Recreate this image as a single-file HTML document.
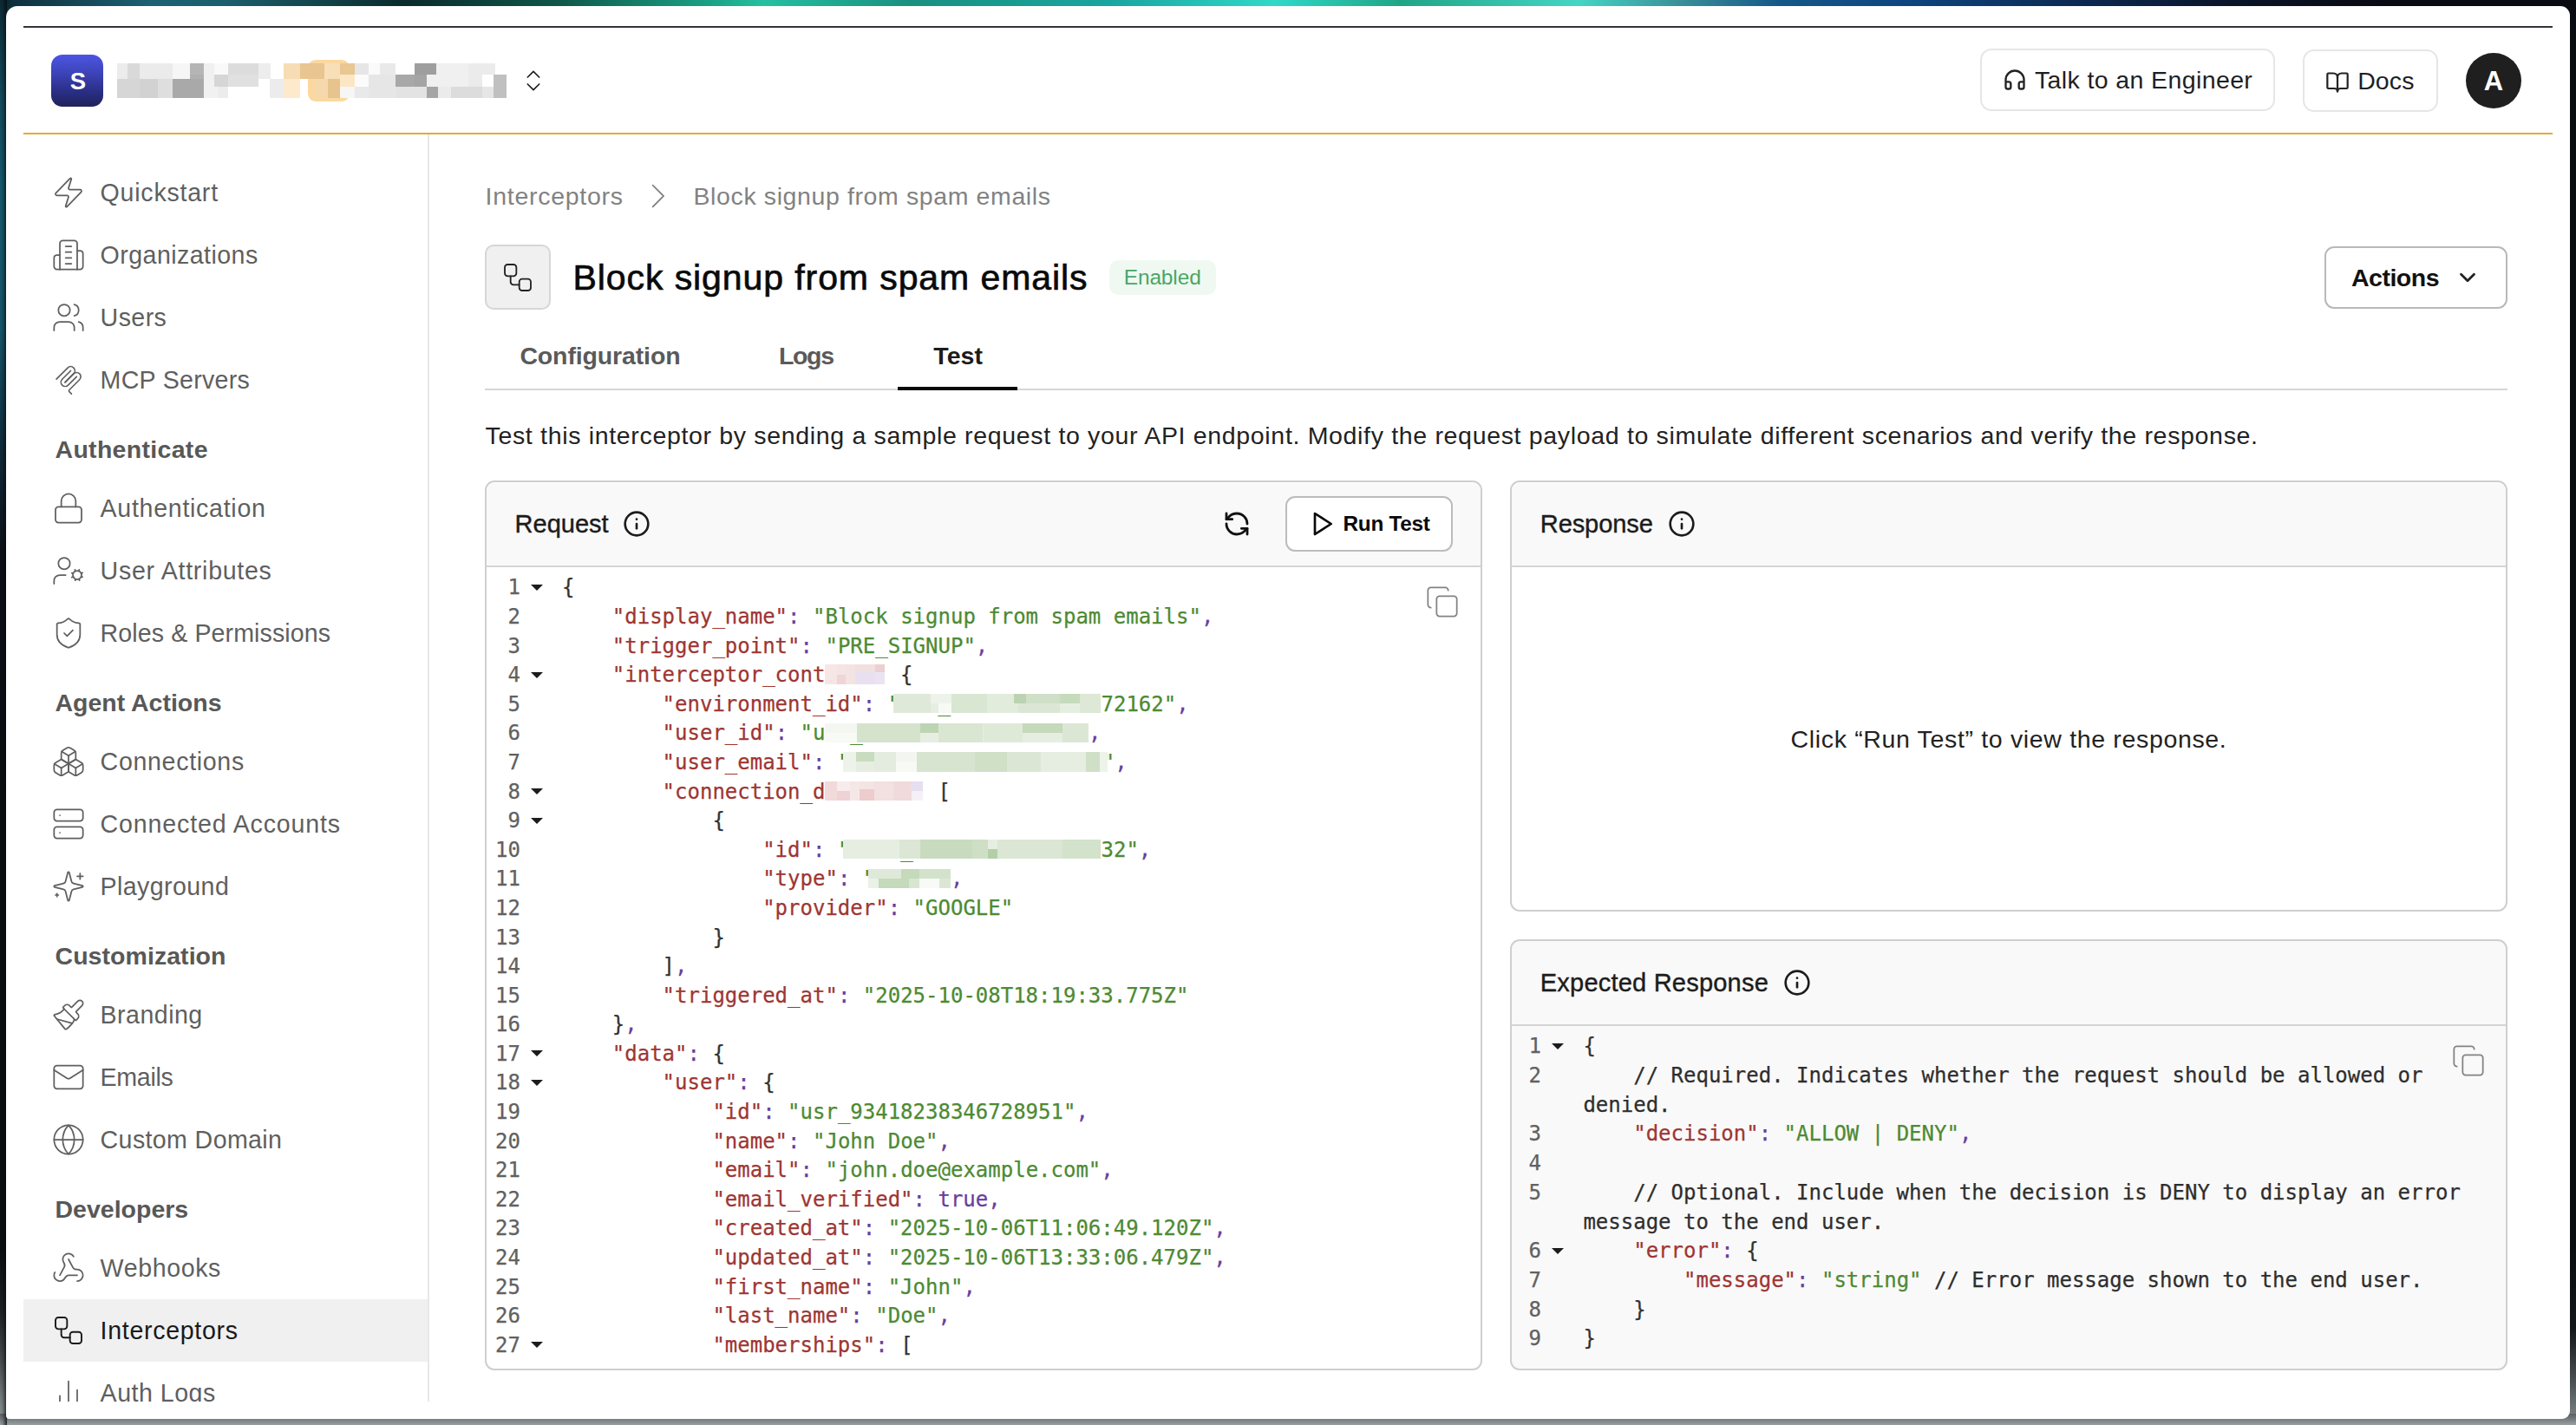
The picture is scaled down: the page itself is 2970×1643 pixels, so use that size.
<!DOCTYPE html>
<html lang="en"><head><meta charset="utf-8"><title>Interceptors – Block signup from spam emails</title>
<style>
html,body{margin:0;padding:0;background:#0b0c10;}
body{width:2970px;height:1643px;overflow:hidden;position:relative;background:#0b0c10;font-family:"Liberation Sans", sans-serif;}
.b{position:absolute;}
.i{position:absolute;display:block;overflow:visible;}
.t{position:absolute;white-space:pre;line-height:1;font-family:"Liberation Sans", sans-serif;}
.ed{position:absolute;font-family:"DejaVu Sans Mono", "Liberation Mono", monospace;font-size:24px;line-height:var(--lh);white-space:pre;color:#333;-webkit-text-stroke:0.25px currentColor;}
.row{position:relative;height:var(--lh);}
.n{position:absolute;left:0;width:60px;text-align:right;color:#616161;}
.f{position:absolute;left:72.4px;top:12.6px;width:0;height:0;border-left:7.6px solid transparent;border-right:7.6px solid transparent;border-top:7.8px solid #1c1c1c;}
.code{position:absolute;left:var(--c0);top:0;}
.k{color:#9e3633;}
.s{color:#4d8a33;}
.p{color:#6a3d9e;}
.v{color:#6a3d9e;}
.c{color:#2e2e2e;}
.br{color:#333;}
.patch{display:inline-block;position:relative;height:22.4px;vertical-align:-2.6px;overflow:hidden;}
.patch i{position:absolute;display:block;}
</style></head>
<body>
<div class="b" style="left:0px;top:0px;width:2970px;height:1643px;background:#0b0c10"></div>
<div class="b" style="left:0px;top:0px;width:2970px;height:30px;background:linear-gradient(90deg,#0e2a3a 0px,#1c6272 175px,#1b5f6c 260px,#0a2a2c 466px,#0f5548 640px,#1aa084 815px,#25c0a0 880px,#189080 1048px,#1aa5a0 1281px,#30d8c8 1470px,#1fa585 1615px,#45d5c5 1820px,#3a9098 1936px,#155888 2052px,#0e4580 2198px,#0c2850 2402px,#0a1428 2577px,#0a0a12 2750px)"></div>
<div class="b" style="left:0px;top:0px;width:12px;height:900px;background:linear-gradient(180deg,#0c2a35 0px,#134a5c 110px,#165a6e 220px,#16566a 380px,#0f2a3a 520px,#0b0f16 640px,#0b0c10 900px)"></div>
<div class="b" style="left:0px;top:1440px;width:12px;height:203px;background:linear-gradient(180deg,#0b0c10 0%,#1d2022 35%,#4a4f51 65%,#7d8485 88%,#969c9d 100%)"></div>
<div class="b" style="left:2958px;top:1440px;width:12px;height:203px;background:linear-gradient(180deg,#0b0c10 0%,#14161a 45%,#4a4f51 75%,#858b8c 100%)"></div>
<div class="b" style="left:0px;top:1630px;width:2970px;height:13px;background:linear-gradient(180deg,#5a6062 0%,#70777a 40%,#9aa0a1 100%)"></div>
<div class="b" style="left:0px;top:0px;width:8px;height:1643px;background:linear-gradient(90deg,rgba(5,10,15,0) 0%,rgba(5,10,15,.15) 40%,rgba(5,10,15,.8) 100%)"></div>
<div class="b" style="left:7px;top:7px;width:2956px;height:1629px;background:#fff;border-radius:13px 11px 9px 4px"></div>
<div class="b" style="left:27px;top:30px;width:2916px;height:2px;background:#34323a"></div>
<div class="b" style="left:27px;top:153px;width:2916px;height:2px;background:#e2ab35"></div>
<div class="b" style="left:59px;top:63px;width:60px;height:60px;background:linear-gradient(180deg,#4c55e4 0%,#3d44b8 35%,#2a2f86 70%,#1f2259 100%);border-radius:13px"></div>
<span id="logoS" class="t" style="left:80.8px;top:80.0px;font-size:27.5px;font-weight:700;color:#fff;letter-spacing:0.000px;">S</span>
<div class="b" style="left:355px;top:69px;width:48px;height:48px;background:#fbd89f;border-radius:9px"></div>
<div class="b" style="left:135px;top:73px;width:12px;height:18px;background:#ececec"></div>
<div class="b" style="left:147px;top:73px;width:14px;height:18px;background:#d9d9d9"></div>
<div class="b" style="left:161px;top:73px;width:38px;height:18px;background:#ebebeb"></div>
<div class="b" style="left:199px;top:73px;width:20px;height:18px;background:#f6f6f6"></div>
<div class="b" style="left:219px;top:73px;width:16px;height:18px;background:#b5b5b5"></div>
<div class="b" style="left:235px;top:73px;width:12px;height:18px;background:#f0f0f0"></div>
<div class="b" style="left:247px;top:73px;width:16px;height:18px;background:#f9f9f9"></div>
<div class="b" style="left:263px;top:73px;width:35px;height:18px;background:#dcdcdc"></div>
<div class="b" style="left:298px;top:73px;width:14px;height:18px;background:#ededed"></div>
<div class="b" style="left:135px;top:91px;width:26px;height:22px;background:#d6d6d6"></div>
<div class="b" style="left:161px;top:91px;width:21px;height:22px;background:#d2d2d2"></div>
<div class="b" style="left:182px;top:91px;width:17px;height:22px;background:#dedede"></div>
<div class="b" style="left:199px;top:91px;width:36px;height:22px;background:#a9a9a9"></div>
<div class="b" style="left:219px;top:86px;width:16px;height:5px;background:#b0b0b0"></div>
<div class="b" style="left:235px;top:91px;width:16px;height:22px;background:#f1f1f1"></div>
<div class="b" style="left:251px;top:91px;width:12px;height:22px;background:#ececec"></div>
<div class="b" style="left:247px;top:86px;width:16px;height:14px;background:#d6d6d6"></div>
<div class="b" style="left:263px;top:86px;width:35px;height:14px;background:#e0e0e0"></div>
<div class="b" style="left:311px;top:91px;width:16px;height:22px;background:#ececec"></div>
<div class="b" style="left:327px;top:73px;width:19px;height:18px;background:#f6ddb5"></div>
<div class="b" style="left:346px;top:73px;width:28px;height:18px;background:#e8c591"></div>
<div class="b" style="left:374px;top:73px;width:18px;height:18px;background:#f8dfb8"></div>
<div class="b" style="left:392px;top:73px;width:17px;height:18px;background:#e9c793"></div>
<div class="b" style="left:327px;top:91px;width:19px;height:22px;background:#fde9cc"></div>
<div class="b" style="left:363px;top:91px;width:15px;height:22px;background:#f5d9ad"></div>
<div class="b" style="left:378px;top:91px;width:14px;height:22px;background:#e7c38d"></div>
<div class="b" style="left:392px;top:86px;width:17px;height:14px;background:#fde6c6"></div>
<div class="b" style="left:409px;top:73px;width:16px;height:13px;background:#e6e6e6"></div>
<div class="b" style="left:425px;top:73px;width:13px;height:13px;background:#fafafa"></div>
<div class="b" style="left:438px;top:73px;width:18px;height:13px;background:#e9e9e9"></div>
<div class="b" style="left:409px;top:86px;width:16px;height:14px;background:#fbfbfb"></div>
<div class="b" style="left:425px;top:86px;width:31px;height:27px;background:#e6e6e6"></div>
<div class="b" style="left:392px;top:100px;width:17px;height:13px;background:#f6f6f6"></div>
<div class="b" style="left:409px;top:100px;width:16px;height:13px;background:#e9e9e9"></div>
<div class="b" style="left:456px;top:86px;width:22px;height:14px;background:#a8a8a8"></div>
<div class="b" style="left:478px;top:73px;width:25px;height:13px;background:#9e9e9e"></div>
<div class="b" style="left:478px;top:86px;width:14px;height:14px;background:#a4a4a4"></div>
<div class="b" style="left:492px;top:86px;width:13px;height:14px;background:#f0f0f0"></div>
<div class="b" style="left:505px;top:86px;width:15px;height:14px;background:#a6a6a6"></div>
<div class="b" style="left:456px;top:100px;width:36px;height:13px;background:#e3e3e3"></div>
<div class="b" style="left:492px;top:100px;width:13px;height:13px;background:#a5a5a5"></div>
<div class="b" style="left:505px;top:100px;width:15px;height:13px;background:#ebebeb"></div>
<div class="b" style="left:503px;top:73px;width:37px;height:27px;background:#f0f0f0"></div>
<div class="b" style="left:540px;top:73px;width:31px;height:27px;background:#ebebeb"></div>
<div class="b" style="left:520px;top:100px;width:36px;height:13px;background:#dcdcdc"></div>
<div class="b" style="left:556px;top:86px;width:15px;height:14px;background:#ffffff"></div>
<div class="b" style="left:556px;top:100px;width:13px;height:13px;background:#e6e6e6"></div>
<div class="b" style="left:569px;top:86px;width:15px;height:27px;background:#c0c0c0"></div>
<svg class="i" style="left:599.0px;top:77.0px" width="32" height="32" viewBox="0 0 24 24" fill="none" stroke="#222" stroke-width="1.3" stroke-linecap="round" stroke-linejoin="round"><path d="m7 15 5 5 5-5"/><path d="m7 9 5-5 5 5"/></svg>
<div class="b" style="left:2282.8px;top:55.8px;width:339.7999999999997px;height:72.0px;border:2px solid #e6e6e6;border-radius:13px;box-sizing:border-box;background:#fff"></div>
<svg class="i" style="left:2308.8px;top:78.2px" width="28" height="28" viewBox="0 0 24 24" fill="none" stroke="#222" stroke-width="2" stroke-linecap="round" stroke-linejoin="round"><path d="M3 14h3a2 2 0 0 1 2 2v3a2 2 0 0 1-2 2H5a2 2 0 0 1-2-2v-7a9 9 0 0 1 18 0v7a2 2 0 0 1-2 2h-1a2 2 0 0 1-2-2v-3a2 2 0 0 1 2-2h3"/></svg>
<span id="talk" class="t" style="left:2345.9px;top:78.4px;font-size:28.5px;font-weight:400;color:#1f1f1f;letter-spacing:0.388px;">Talk to an Engineer</span>
<div class="b" style="left:2654.9px;top:56.6px;width:156.0999999999999px;height:72.20000000000002px;border:2px solid #e6e6e6;border-radius:13px;box-sizing:border-box;background:#fff"></div>
<svg class="i" style="left:2680.8px;top:81.0px" width="28" height="28" viewBox="0 0 24 24" fill="none" stroke="#222" stroke-width="1.9" stroke-linecap="round" stroke-linejoin="round"><path d="M12 7v14"/><path d="M3 18a1 1 0 0 1-1-1V4a1 1 0 0 1 1-1h5a4 4 0 0 1 4 4 4 4 0 0 1 4-4h5a1 1 0 0 1 1 1v13a1 1 0 0 1-1 1h-6a3 3 0 0 0-3 3 3 3 0 0 0-3-3z"/></svg>
<span id="docs" class="t" style="left:2718.2px;top:79.3px;font-size:28.5px;font-weight:400;color:#1f1f1f;letter-spacing:0.089px;">Docs</span>
<div class="b" style="left:2843px;top:61px;width:64px;height:64px;background:#1f1f1f;border-radius:50%"></div>
<span id="avA" class="t" style="left:2863.8px;top:78.0px;font-size:31px;font-weight:700;color:#fff;letter-spacing:0.000px;">A</span>
<div class="b" style="left:493px;top:155px;width:2px;height:1461px;background:#e8e8e8"></div>
<div class="b" style="left:27px;top:1498px;width:466px;height:72px;background:#f0f0f0"></div>
<svg class="i" style="left:59.0px;top:201.6px" width="40" height="40" viewBox="0 0 24 24" fill="none" stroke="#5f5f5f" stroke-width="1.05" stroke-linecap="round" stroke-linejoin="round"><path d="M4 14a1 1 0 0 1-.78-1.63l9.9-10.2a.5.5 0 0 1 .86.46l-1.92 6.02A1 1 0 0 0 13 10h7a1 1 0 0 1 .78 1.63l-9.9 10.2a.5.5 0 0 1-.86-.46l1.92-6.02A1 1 0 0 0 11 14z"/></svg>
<span id="nav0" class="t" style="left:115.6px;top:207.8px;font-size:28.6px;font-weight:400;color:#5f5f5f;letter-spacing:0.754px;">Quickstart</span>
<svg class="i" style="left:59.0px;top:273.6px" width="40" height="40" viewBox="0 0 24 24" fill="none" stroke="#5f5f5f" stroke-width="1.05" stroke-linecap="round" stroke-linejoin="round"><path d="M6 22V4a2 2 0 0 1 2-2h8a2 2 0 0 1 2 2v18Z"/><path d="M6 12H4a2 2 0 0 0-2 2v6a2 2 0 0 0 2 2h2"/><path d="M18 9h2a2 2 0 0 1 2 2v9a2 2 0 0 1-2 2h-2"/><path d="M10 6h4"/><path d="M10 10h4"/><path d="M10 14h4"/><path d="M10 18h4"/></svg>
<span id="nav1" class="t" style="left:115.6px;top:279.8px;font-size:28.6px;font-weight:400;color:#5f5f5f;letter-spacing:0.431px;">Organizations</span>
<svg class="i" style="left:59.0px;top:345.8px" width="40" height="40" viewBox="0 0 24 24" fill="none" stroke="#5f5f5f" stroke-width="1.05" stroke-linecap="round" stroke-linejoin="round"><path d="M16 21v-2a4 4 0 0 0-4-4H6a4 4 0 0 0-4 4v2"/><circle cx="9" cy="7" r="4"/><path d="M22 21v-2a4 4 0 0 0-3-3.87"/><path d="M16 3.13a4 4 0 0 1 0 7.75"/></svg>
<span id="nav2" class="t" style="left:115.6px;top:351.9px;font-size:28.6px;font-weight:400;color:#5f5f5f;letter-spacing:0.407px;">Users</span>
<svg class="i" style="left:59.0px;top:417.8px" width="40" height="40" viewBox="0 0 24 24" fill="none" stroke="#5f5f5f" stroke-width="1.05" stroke-linecap="round" stroke-linejoin="round"><g transform="translate(12 12.2) scale(.93) translate(-12 -12)"><path d="M3 11.2 11.4 2.8a3.1 3.1 0 0 1 4.4 4.4L9.4 13.6"/><path d="M9.5 13.5l6.3-6.3a3.1 3.1 0 0 1 4.4 4.4l-7.6 7.6a1 1 0 0 0 0 1.4l1.6 1.6"/><path d="M13.6 5 7.3 11.3a3.1 3.1 0 0 0 4.4 4.4L18 9.4"/></g></svg>
<span id="nav3" class="t" style="left:115.6px;top:423.9px;font-size:28.6px;font-weight:400;color:#5f5f5f;letter-spacing:0.281px;">MCP Servers</span>
<svg class="i" style="left:59.0px;top:565.8px" width="40" height="40" viewBox="0 0 24 24" fill="none" stroke="#5f5f5f" stroke-width="1.05" stroke-linecap="round" stroke-linejoin="round"><rect width="18" height="11" x="3" y="11" rx="2" ry="2"/><path d="M7 11V7a5 5 0 0 1 10 0v4"/></svg>
<span id="nav4" class="t" style="left:115.6px;top:571.9px;font-size:28.6px;font-weight:400;color:#5f5f5f;letter-spacing:0.697px;">Authentication</span>
<svg class="i" style="left:59.0px;top:637.8px" width="40" height="40" viewBox="0 0 24 24" fill="none" stroke="#5f5f5f" stroke-width="1.05" stroke-linecap="round" stroke-linejoin="round"><circle cx="18" cy="15" r="3"/><circle cx="9" cy="7" r="4"/><path d="M10 15H6a4 4 0 0 0-4 4v2"/><path d="m21.7 16.4-.9-.3"/><path d="m15.2 13.9-.9-.3"/><path d="m16.6 18.7.3-.9"/><path d="m19.1 12.2.3-.9"/><path d="m19.6 18.7-.4-1"/><path d="m16.8 12.3-.4-1"/><path d="m14.3 16.6 1-.4"/><path d="m20.7 13.8 1-.4"/></svg>
<span id="nav5" class="t" style="left:115.6px;top:643.9px;font-size:28.6px;font-weight:400;color:#5f5f5f;letter-spacing:0.697px;">User Attributes</span>
<svg class="i" style="left:59.0px;top:709.8px" width="40" height="40" viewBox="0 0 24 24" fill="none" stroke="#5f5f5f" stroke-width="1.05" stroke-linecap="round" stroke-linejoin="round"><path d="M20 13c0 5-3.5 7.5-7.66 8.95a1 1 0 0 1-.67-.01C7.5 20.5 4 18 4 13V6a1 1 0 0 1 1-1c2 0 4.5-1.2 6.24-2.72a1.17 1.17 0 0 1 1.52 0C14.51 3.81 17 5 19 5a1 1 0 0 1 1 1z"/><path d="m9 12 2 2 4-4"/></svg>
<span id="nav6" class="t" style="left:115.6px;top:715.9px;font-size:28.6px;font-weight:400;color:#5f5f5f;letter-spacing:0.096px;">Roles &amp; Permissions</span>
<svg class="i" style="left:59.0px;top:857.8px" width="40" height="40" viewBox="0 0 24 24" fill="none" stroke="#5f5f5f" stroke-width="1.05" stroke-linecap="round" stroke-linejoin="round"><path d="M2.97 12.92A2 2 0 0 0 2 14.63v3.24a2 2 0 0 0 .97 1.71l3 1.8a2 2 0 0 0 2.06 0L12 19v-5.5l-5-3-4.03 2.42Z"/><path d="m7 16.5-4.74-2.85"/><path d="m7 16.5 5-3"/><path d="M7 16.5v5.17"/><path d="M12 13.5V19l3.97 2.38a2 2 0 0 0 2.06 0l3-1.8a2 2 0 0 0 .97-1.71v-3.24a2 2 0 0 0-.97-1.71L17 10.5l-5 3Z"/><path d="m17 16.5-5-3"/><path d="m17 16.5 4.74-2.85"/><path d="M17 16.5v5.17"/><path d="M7.97 4.42A2 2 0 0 0 7 6.13v4.37l5 3 5-3V6.13a2 2 0 0 0-.97-1.71l-3-1.8a2 2 0 0 0-2.06 0l-3 1.8Z"/><path d="M12 8 7.26 5.15"/><path d="m12 8 4.74-2.85"/><path d="M12 13.5V8"/></svg>
<span id="nav7" class="t" style="left:115.6px;top:863.9px;font-size:28.6px;font-weight:400;color:#5f5f5f;letter-spacing:0.663px;">Connections</span>
<svg class="i" style="left:59.0px;top:929.8px" width="40" height="40" viewBox="0 0 24 24" fill="none" stroke="#5f5f5f" stroke-width="1.05" stroke-linecap="round" stroke-linejoin="round"><rect width="20" height="8" x="2" y="2" rx="2" ry="2"/><rect width="20" height="8" x="2" y="14" rx="2" ry="2"/><line x1="6" x2="6.01" y1="6" y2="6"/><line x1="6" x2="6.01" y1="18" y2="18"/></svg>
<span id="nav8" class="t" style="left:115.6px;top:935.9px;font-size:28.6px;font-weight:400;color:#5f5f5f;letter-spacing:0.836px;">Connected Accounts</span>
<svg class="i" style="left:59.0px;top:1001.8px" width="40" height="40" viewBox="0 0 24 24" fill="none" stroke="#5f5f5f" stroke-width="1.05" stroke-linecap="round" stroke-linejoin="round"><path d="M9.937 15.5A2 2 0 0 0 8.5 14.063l-6.135-1.582a.5.5 0 0 1 0-.962L8.5 9.936A2 2 0 0 0 9.937 8.5l1.582-6.135a.5.5 0 0 1 .963 0L14.063 8.5A2 2 0 0 0 15.5 9.937l6.135 1.581a.5.5 0 0 1 0 .964L15.5 14.063a2 2 0 0 0-1.437 1.437l-1.582 6.135a.5.5 0 0 1-.963 0z"/><path d="M20 3v4"/><path d="M22 5h-4"/><path d="M4 17v2"/><path d="M5 18H3"/></svg>
<span id="nav9" class="t" style="left:115.6px;top:1007.9px;font-size:28.6px;font-weight:400;color:#5f5f5f;letter-spacing:0.392px;">Playground</span>
<svg class="i" style="left:59.0px;top:1149.8px" width="40" height="40" viewBox="0 0 24 24" fill="none" stroke="#5f5f5f" stroke-width="1.05" stroke-linecap="round" stroke-linejoin="round"><path d="m14.622 17.897-10.68-2.913"/><path d="M18.376 2.622a1 1 0 1 1 3.002 3.002L17.36 9.643a.5.5 0 0 0 0 .707l.944.944a2.41 2.41 0 0 1 0 3.408l-.944.944a.5.5 0 0 1-.707 0L8.354 7.348a.5.5 0 0 1 0-.707l.944-.944a2.41 2.41 0 0 1 3.408 0l.944.944a.5.5 0 0 0 .707 0z"/><path d="M9 8c-1.804 2.71-3.97 3.46-6.583 3.948a.507.507 0 0 0-.302.819l7.32 8.883a1 1 0 0 0 1.185.204C12.735 20.405 16 16.792 16 15"/></svg>
<span id="nav10" class="t" style="left:115.6px;top:1155.9px;font-size:28.6px;font-weight:400;color:#5f5f5f;letter-spacing:0.448px;">Branding</span>
<svg class="i" style="left:59.0px;top:1221.8px" width="40" height="40" viewBox="0 0 24 24" fill="none" stroke="#5f5f5f" stroke-width="1.05" stroke-linecap="round" stroke-linejoin="round"><rect width="20" height="16" x="2" y="4" rx="2"/><path d="m22 7-8.97 5.7a1.94 1.94 0 0 1-2.06 0L2 7"/></svg>
<span id="nav11" class="t" style="left:115.6px;top:1227.9px;font-size:28.6px;font-weight:400;color:#5f5f5f;letter-spacing:-0.322px;">Emails</span>
<svg class="i" style="left:59.0px;top:1293.8px" width="40" height="40" viewBox="0 0 24 24" fill="none" stroke="#5f5f5f" stroke-width="1.05" stroke-linecap="round" stroke-linejoin="round"><circle cx="12" cy="12" r="10"/><path d="M12 2a14.5 14.5 0 0 0 0 20 14.5 14.5 0 0 0 0-20"/><path d="M2 12h20"/></svg>
<span id="nav12" class="t" style="left:115.6px;top:1299.9px;font-size:28.6px;font-weight:400;color:#5f5f5f;letter-spacing:0.367px;">Custom Domain</span>
<svg class="i" style="left:59.0px;top:1441.8px" width="40" height="40" viewBox="0 0 24 24" fill="none" stroke="#5f5f5f" stroke-width="1.05" stroke-linecap="round" stroke-linejoin="round"><path d="M18 16.98h-5.99c-1.1 0-1.95.94-2.48 1.9A4 4 0 0 1 2 17c.01-.7.2-1.4.57-2"/><path d="m6 17 3.13-5.78c.53-.97.1-2.18-.5-3.1a4 4 0 1 1 6.89-4.06"/><path d="m12 6 3.13 5.73C15.66 12.7 16.9 13 18 13a4 4 0 0 1 0 8"/></svg>
<span id="nav13" class="t" style="left:115.6px;top:1447.9px;font-size:28.6px;font-weight:400;color:#5f5f5f;letter-spacing:0.603px;">Webhooks</span>
<svg class="i" style="left:59.0px;top:1513.8px" width="40" height="40" viewBox="0 0 24 24" fill="none" stroke="#1a1a1a" stroke-width="1.15" stroke-linecap="round" stroke-linejoin="round"><rect width="8" height="8" x="3" y="3" rx="2"/><path d="M7 11v4a2 2 0 0 0 2 2h4"/><rect width="8" height="8" x="13" y="13" rx="2"/></svg>
<span id="nav14" class="t" style="left:115.6px;top:1519.9px;font-size:28.6px;font-weight:400;color:#1a1a1a;letter-spacing:0.673px;">Interceptors</span>
<svg class="i" style="left:59.0px;top:1585.8px" width="40" height="40" viewBox="0 0 24 24" fill="none" stroke="#5f5f5f" stroke-width="1.05" stroke-linecap="round" stroke-linejoin="round"><line x1="18" x2="18" y1="20" y2="10"/><line x1="12" x2="12" y1="20" y2="4"/><line x1="6" x2="6" y1="20" y2="14"/></svg>
<span id="nav15" class="t" style="left:115.6px;top:1591.9px;font-size:28.6px;font-weight:400;color:#5f5f5f;letter-spacing:0.478px;">Auth Logs</span>
<span id="head0" class="t" style="left:63.5px;top:503.9px;font-size:28.5px;font-weight:700;color:#585858;letter-spacing:0.308px;">Authenticate</span>
<span id="head1" class="t" style="left:63.5px;top:796.0px;font-size:28.5px;font-weight:700;color:#585858;letter-spacing:-0.010px;">Agent Actions</span>
<span id="head2" class="t" style="left:63.5px;top:1088.0px;font-size:28.5px;font-weight:700;color:#585858;letter-spacing:0.055px;">Customization</span>
<span id="head3" class="t" style="left:63.5px;top:1380.0px;font-size:28.5px;font-weight:700;color:#585858;letter-spacing:0.003px;">Developers</span>
<div class="b" style="left:27px;top:1616px;width:466px;height:20px;background:#fff"></div>
<span id="bc1" class="t" style="left:559.6px;top:212.4px;font-size:28.5px;font-weight:400;color:#828282;letter-spacing:0.719px;">Interceptors</span>
<svg class="i" style="left:750.2px;top:211.1px" width="20" height="30" viewBox="0 0 20 30" fill="none" stroke="#7c7c7c" stroke-width="1.7" stroke-linecap="square" stroke-linejoin="miter"><path d="M2.8 2.8 15 15 2.8 27.2"/></svg>
<span id="bc2" class="t" style="left:799.5px;top:212.4px;font-size:28.5px;font-weight:400;color:#828282;letter-spacing:0.611px;">Block signup from spam emails</span>
<div class="b" style="left:559px;top:282px;width:76px;height:75px;background:#f0f0f0;border:2px solid #d6d6d6;border-radius:10px;box-sizing:border-box"></div>
<svg class="i" style="left:577.3px;top:300.0px" width="40" height="40" viewBox="0 0 24 24" fill="none" stroke="#222" stroke-width="1.1" stroke-linecap="round" stroke-linejoin="round"><rect width="8" height="8" x="3" y="3" rx="2"/><path d="M7 11v4a2 2 0 0 0 2 2h4"/><rect width="8" height="8" x="13" y="13" rx="2"/></svg>
<span id="title" class="t" style="left:660.5px;top:299.9px;font-size:41px;font-weight:400;color:#0a0a0a;letter-spacing:0.915px;-webkit-text-stroke:0.7px #0a0a0a;">Block signup from spam emails</span>
<div class="b" style="left:1279px;top:300px;width:123px;height:40px;background:#eff9f1;border-radius:10px"></div>
<span id="enabled" class="t" style="left:1295.7px;top:308.0px;font-size:24.5px;font-weight:400;color:#4ba565;letter-spacing:-0.138px;">Enabled</span>
<div class="b" style="left:2680px;top:284px;width:211px;height:72px;border:2px solid #b9b9b9;border-radius:11px;box-sizing:border-box;background:#fff"></div>
<span id="actions" class="t" style="left:2711.0px;top:305.9px;font-size:28.5px;font-weight:700;color:#111;letter-spacing:-0.502px;">Actions</span>
<svg class="i" style="left:2830.0px;top:305.0px" width="30" height="30" viewBox="0 0 24 24" fill="none" stroke="#222" stroke-width="2.2" stroke-linecap="round" stroke-linejoin="round"><path d="m6 9 6 6 6-6"/></svg>
<span id="tab0" class="t" style="left:599.4px;top:396.1px;font-size:28.5px;font-weight:700;color:#5a5a5a;letter-spacing:-0.134px;">Configuration</span>
<span id="tab1" class="t" style="left:898.0px;top:396.1px;font-size:28.5px;font-weight:700;color:#5a5a5a;letter-spacing:-1.362px;">Logs</span>
<span id="tab2" class="t" style="left:1076.3px;top:396.1px;font-size:28.5px;font-weight:700;color:#1c1c1c;letter-spacing:0.069px;">Test</span>
<div class="b" style="left:559px;top:448px;width:2332px;height:2px;background:#d6d6d6"></div>
<div class="b" style="left:1035px;top:446px;width:138px;height:4px;background:#0a0a0a"></div>
<span id="desc" class="t" style="left:559.5px;top:488.3px;font-size:28.5px;font-weight:400;color:#222;letter-spacing:0.671px;">Test this interceptor by sending a sample request to your API endpoint. Modify the request payload to simulate different scenarios and verify the response.</span>
<div class="b" style="left:559px;top:554.4px;width:1150px;height:1025.6px;border:2px solid #cfcfcf;border-radius:11px;box-sizing:border-box;background:#fff"></div>
<div class="b" style="left:561px;top:557px;width:1146px;height:95px;background:#f9f9f9;border-radius:9px 9px 0 0"></div>
<div class="b" style="left:561px;top:652px;width:1146px;height:2px;background:#d4d4d4"></div>
<span id="req" class="t" style="left:593.6px;top:590.0px;font-size:29px;font-weight:400;color:#1c1c1c;letter-spacing:-0.005px;-webkit-text-stroke:0.4px #1c1c1c;">Request</span>
<svg class="i" style="left:718.0px;top:588.0px" width="32" height="32" viewBox="0 0 24 24" fill="none" stroke="#1c1c1c" stroke-width="2" stroke-linecap="round" stroke-linejoin="round"><circle cx="12" cy="12" r="10"/><path d="M12 16v-4"/><path d="M12 8h.01"/></svg>
<svg class="i" style="left:1410.0px;top:588.0px" width="32" height="32" viewBox="0 0 24 24" fill="none" stroke="#111" stroke-width="2.1" stroke-linecap="round" stroke-linejoin="round"><path d="M21 12a9 9 0 0 0-9-9 9.75 9.75 0 0 0-6.74 2.74L3 8"/><path d="M3 3v5h5"/><path d="M3 12a9 9 0 0 0 9 9 9.75 9.75 0 0 0 6.74-2.74L21 16"/><path d="M16 16h5v5"/></svg>
<div class="b" style="left:1482px;top:572px;width:192.5px;height:64.29999999999995px;border:2px solid #bcbcbc;border-radius:11px;box-sizing:border-box;background:#fff"></div>
<svg class="i" style="left:1507.9px;top:588.2px" width="32" height="32" viewBox="0 0 24 24" fill="none" stroke="#0a0a0a" stroke-width="2" stroke-linecap="round" stroke-linejoin="round"><polygon points="6 3 20 12 6 21 6 3"/></svg>
<span id="run" class="t" style="left:1548.6px;top:591.7px;font-size:24.3px;font-weight:700;color:#0a0a0a;letter-spacing:-0.278px;">Run Test</span>
<svg class="i" style="left:1643.0px;top:673.5px" width="40" height="40" viewBox="0 0 24 24" fill="none" stroke="#828282" stroke-width="1.05" stroke-linecap="round" stroke-linejoin="round"><rect width="14" height="14" x="8" y="8" rx="2" ry="2"/><path d="M4 16c-1.1 0-2-.9-2-2V4c0-1.1.9-2 2-2h10c1.1 0 2 .9 2 2"/></svg>
<div class="b" style="left:1741px;top:554.4px;width:1150px;height:496.6px;border:2px solid #cfcfcf;border-radius:11px;box-sizing:border-box;background:#fff"></div>
<div class="b" style="left:1743px;top:557px;width:1146px;height:95px;background:#f9f9f9;border-radius:9px 9px 0 0"></div>
<div class="b" style="left:1743px;top:652px;width:1146px;height:2px;background:#d4d4d4"></div>
<span id="resp" class="t" style="left:1775.8px;top:590.0px;font-size:29px;font-weight:400;color:#1c1c1c;letter-spacing:-0.084px;-webkit-text-stroke:0.4px #1c1c1c;">Response</span>
<svg class="i" style="left:1923.0px;top:588.0px" width="32" height="32" viewBox="0 0 24 24" fill="none" stroke="#1c1c1c" stroke-width="2" stroke-linecap="round" stroke-linejoin="round"><circle cx="12" cy="12" r="10"/><path d="M12 16v-4"/><path d="M12 8h.01"/></svg>
<span id="click" class="t" style="left:2064.5px;top:837.9px;font-size:28.5px;font-weight:400;color:#222;letter-spacing:0.661px;">Click “Run Test” to view the response.</span>
<div class="b" style="left:1741px;top:1083px;width:1150px;height:497px;border:2px solid #cfcfcf;border-radius:11px;box-sizing:border-box;background:#f9f9f9"></div>
<div class="b" style="left:1743px;top:1181px;width:1146px;height:2px;background:#d4d4d4"></div>
<span id="exp" class="t" style="left:1775.8px;top:1119.0px;font-size:29px;font-weight:400;color:#1c1c1c;letter-spacing:0.215px;-webkit-text-stroke:0.4px #1c1c1c;">Expected Response</span>
<svg class="i" style="left:2056.0px;top:1117.0px" width="32" height="32" viewBox="0 0 24 24" fill="none" stroke="#1c1c1c" stroke-width="2" stroke-linecap="round" stroke-linejoin="round"><circle cx="12" cy="12" r="10"/><path d="M12 16v-4"/><path d="M12 8h.01"/></svg>
<svg class="i" style="left:2826.0px;top:1203.0px" width="40" height="40" viewBox="0 0 24 24" fill="none" stroke="#828282" stroke-width="1.05" stroke-linecap="round" stroke-linejoin="round"><rect width="14" height="14" x="8" y="8" rx="2" ry="2"/><path d="M4 16c-1.1 0-2-.9-2-2V4c0-1.1.9-2 2-2h10c1.1 0 2 .9 2 2"/></svg>
<div class="ed" style="left:539.9px;top:661.4px;--c0:108.1px;--lh:33.6px"><div class="row"><span class="n">1</span><span class="f"></span><span class="code" style="padding-left:0.00px"><span class="br">{</span></span></div><div class="row"><span class="n">2</span><span class="code" style="padding-left:57.80px"><span class="k">"display_name"</span><span class="p">: </span><span class="s">"Block signup from spam emails"</span><span class="p">,</span></span></div><div class="row"><span class="n">3</span><span class="code" style="padding-left:57.80px"><span class="k">"trigger_point"</span><span class="p">: </span><span class="s">"PRE_SIGNUP"</span><span class="p">,</span></span></div><div class="row"><span class="n">4</span><span class="f"></span><span class="code" style="padding-left:57.80px"><span class="k">"interceptor_cont</span><span class="patch" style="width:68.20px;background:#f5e4e4"><i style="left:0.0%;width:20.0%;top:0%;height:100%;background:#f6e6e6"></i><i style="left:20.0%;width:15.0%;top:50%;height:50%;background:#efd5d6"></i><i style="left:35.0%;width:15.0%;top:0%;height:100%;background:#f4e3e3"></i><i style="left:50.0%;width:35.0%;top:40%;height:60%;background:#e8e0f1"></i><i style="left:50.0%;width:35.0%;top:0%;height:40%;background:#f2dfe0"></i><i style="left:85.0%;width:15.0%;top:0%;height:40%;background:#eccfd0"></i><i style="left:85.0%;width:15.0%;top:40%;height:60%;background:#ebe3f2"></i></span><span style="margin-left:4.05px"></span> <span class="br">{</span></span></div><div class="row"><span class="n">5</span><span class="code" style="padding-left:115.60px"><span class="k">"environment_id"</span><span class="p">: </span><span class="s">"</span><span style="margin-left:-8.5px"></span><span class="patch" style="width:239.87px;background:#e6eee1"><i style="left:0.0%;width:18.0%;top:0%;height:100%;background:#dfe9d9"></i><i style="left:18.0%;width:10.0%;top:0%;height:50%;background:#eef3ea"></i><i style="left:22.0%;width:6.0%;top:50%;height:50%;background:#f7f9f5"></i><i style="left:28.0%;width:17.0%;top:0%;height:100%;background:#d9e6d2"></i><i style="left:45.0%;width:15.0%;top:0%;height:100%;background:#e2ecdc"></i><i style="left:58.0%;width:6.0%;top:0%;height:50%;background:#bcd3b1"></i><i style="left:64.0%;width:16.0%;top:0%;height:50%;background:#d0e0c8"></i><i style="left:80.0%;width:10.0%;top:0%;height:50%;background:#c6dabc"></i><i style="left:90.0%;width:10.0%;top:0%;height:100%;background:#dde8d6"></i><i style="left:60.0%;width:20.0%;top:50%;height:50%;background:#dbe7d4"></i></span><span class="s">72162"</span><span class="p">,</span></span><span class="code s" style="padding-left:433.50px">_</span></div><div class="row"><span class="n">6</span><span class="code" style="padding-left:115.60px"><span class="k">"user_id"</span><span class="p">: </span><span class="s">"u</span><span class="patch" style="width:303.45px;background:#e6eee1"><i style="left:0.0%;width:12.0%;top:0%;height:50%;background:#f4f7f1"></i><i style="left:12.0%;width:24.0%;top:0%;height:100%;background:#d5e3cd"></i><i style="left:36.0%;width:7.0%;top:0%;height:50%;background:#bdd4b2"></i><i style="left:43.0%;width:17.0%;top:0%;height:100%;background:#d9e6d2"></i><i style="left:60.0%;width:15.0%;top:0%;height:100%;background:#dfe9d8"></i><i style="left:75.0%;width:15.0%;top:0%;height:50%;background:#c5d9bb"></i><i style="left:90.0%;width:10.0%;top:0%;height:100%;background:#dbe7d4"></i><i style="left:0.0%;width:12.0%;top:50%;height:50%;background:#f8faf6"></i></span><span class="p">,</span></span><span class="code s" style="padding-left:332.35px">_</span></div><div class="row"><span class="n">7</span><span class="code" style="padding-left:115.60px"><span class="k">"user_email"</span><span class="p">: </span><span class="s">"</span><span style="margin-left:-8.5px"></span><span class="patch" style="width:304.89px;background:#e6eee1"><i style="left:0.0%;width:5.0%;top:0%;height:100%;background:#eef3ea"></i><i style="left:5.0%;width:7.0%;top:0%;height:50%;background:#c9dcbf"></i><i style="left:12.0%;width:8.0%;top:0%;height:100%;background:#e3ecde"></i><i style="left:20.0%;width:8.0%;top:0%;height:50%;background:#f3f6f0"></i><i style="left:20.0%;width:8.0%;top:50%;height:50%;background:#f7f9f5"></i><i style="left:28.0%;width:22.0%;top:0%;height:100%;background:#d7e4cf"></i><i style="left:50.0%;width:12.0%;top:0%;height:100%;background:#cfe0c6"></i><i style="left:62.0%;width:13.0%;top:0%;height:100%;background:#dbe7d4"></i><i style="left:75.0%;width:17.0%;top:0%;height:100%;background:#e6eee1"></i><i style="left:92.0%;width:5.0%;top:0%;height:100%;background:#d0e0c7"></i><i style="left:97.0%;width:3.0%;top:0%;height:100%;background:#eef3ea"></i></span><span style="margin-left:-6px"></span><span class="s">"</span><span class="p">,</span></span></div><div class="row"><span class="n">8</span><span class="f"></span><span class="code" style="padding-left:115.60px"><span class="k">"connection_d</span><span class="patch" style="width:112.71px;background:#f5e4e4"><i style="left:0.0%;width:12.0%;top:0%;height:100%;background:#f2d9da"></i><i style="left:12.0%;width:13.0%;top:0%;height:50%;background:#f7ebeb"></i><i style="left:12.0%;width:13.0%;top:50%;height:50%;background:#efd3d4"></i><i style="left:25.0%;width:10.0%;top:0%;height:100%;background:#f6e7e7"></i><i style="left:35.0%;width:15.0%;top:40%;height:60%;background:#eccccd"></i><i style="left:50.0%;width:20.0%;top:0%;height:100%;background:#f3e0e0"></i><i style="left:70.0%;width:18.0%;top:0%;height:100%;background:#f1dadb"></i><i style="left:88.0%;width:12.0%;top:0%;height:50%;background:#e6dff0"></i><i style="left:88.0%;width:12.0%;top:50%;height:50%;background:#f5f0f8"></i></span><span style="margin-left:2.89px"></span> <span class="br">[</span></span></div><div class="row"><span class="n">9</span><span class="f"></span><span class="code" style="padding-left:173.40px"><span class="br">{</span></span></div><div class="row"><span class="n">10</span><span class="code" style="padding-left:231.20px"><span class="k">"id"</span><span class="p">: </span><span class="s">"</span><span style="margin-left:-8.5px"></span><span class="patch" style="width:297.67px;background:#e6eee1"><i style="left:0.0%;width:22.0%;top:0%;height:100%;background:#e6eee1"></i><i style="left:22.0%;width:8.0%;top:0%;height:100%;background:#dbe7d4"></i><i style="left:30.0%;width:20.0%;top:0%;height:100%;background:#c8dbbf"></i><i style="left:50.0%;width:6.0%;top:0%;height:100%;background:#cfdfc6"></i><i style="left:56.0%;width:4.0%;top:50%;height:50%;background:#b4cea8"></i><i style="left:60.0%;width:25.0%;top:0%;height:100%;background:#dbe7d4"></i><i style="left:85.0%;width:15.0%;top:0%;height:100%;background:#d3e2cb"></i></span><span class="s">32"</span><span class="p">,</span></span><span class="code s" style="padding-left:390.15px">_</span></div><div class="row"><span class="n">11</span><span class="code" style="padding-left:231.20px"><span class="k">"type"</span><span class="p">: </span><span class="s">"</span><span style="margin-left:-8.5px"></span><span class="patch" style="width:95.37px;background:#e6eee1"><i style="left:0.0%;width:40.0%;top:0%;height:50%;background:#dfe9d9"></i><i style="left:40.0%;width:22.0%;top:0%;height:50%;background:#c5d9bb"></i><i style="left:62.0%;width:38.0%;top:0%;height:50%;background:#d3e2cb"></i><i style="left:0.0%;width:13.0%;top:50%;height:50%;background:#eaf1e6"></i><i style="left:13.0%;width:37.0%;top:50%;height:50%;background:#c5d9bb"></i><i style="left:50.0%;width:12.0%;top:50%;height:50%;background:#d8e5d1"></i><i style="left:62.0%;width:24.0%;top:50%;height:50%;background:#f8faf7"></i><i style="left:86.0%;width:14.0%;top:50%;height:50%;background:#dbe7d4"></i></span><span class="p">,</span></span></div><div class="row"><span class="n">12</span><span class="code" style="padding-left:231.20px"><span class="k">"provider"</span><span class="p">: </span><span class="s">"GOOGLE"</span></span></div><div class="row"><span class="n">13</span><span class="code" style="padding-left:173.40px"><span class="br">}</span></span></div><div class="row"><span class="n">14</span><span class="code" style="padding-left:115.60px"><span class="br">]</span><span class="p">,</span></span></div><div class="row"><span class="n">15</span><span class="code" style="padding-left:115.60px"><span class="k">"triggered_at"</span><span class="p">: </span><span class="s">"2025-10-08T18:19:33.775Z"</span></span></div><div class="row"><span class="n">16</span><span class="code" style="padding-left:57.80px"><span class="br">}</span><span class="p">,</span></span></div><div class="row"><span class="n">17</span><span class="f"></span><span class="code" style="padding-left:57.80px"><span class="k">"data"</span><span class="p">: </span><span class="br">{</span></span></div><div class="row"><span class="n">18</span><span class="f"></span><span class="code" style="padding-left:115.60px"><span class="k">"user"</span><span class="p">: </span><span class="br">{</span></span></div><div class="row"><span class="n">19</span><span class="code" style="padding-left:173.40px"><span class="k">"id"</span><span class="p">: </span><span class="s">"usr_93418238346728951"</span><span class="p">,</span></span></div><div class="row"><span class="n">20</span><span class="code" style="padding-left:173.40px"><span class="k">"name"</span><span class="p">: </span><span class="s">"John Doe"</span><span class="p">,</span></span></div><div class="row"><span class="n">21</span><span class="code" style="padding-left:173.40px"><span class="k">"email"</span><span class="p">: </span><span class="s">"john.doe@example.com"</span><span class="p">,</span></span></div><div class="row"><span class="n">22</span><span class="code" style="padding-left:173.40px"><span class="k">"email_verified"</span><span class="p">: </span><span class="v">true</span><span class="p">,</span></span></div><div class="row"><span class="n">23</span><span class="code" style="padding-left:173.40px"><span class="k">"created_at"</span><span class="p">: </span><span class="s">"2025-10-06T11:06:49.120Z"</span><span class="p">,</span></span></div><div class="row"><span class="n">24</span><span class="code" style="padding-left:173.40px"><span class="k">"updated_at"</span><span class="p">: </span><span class="s">"2025-10-06T13:33:06.479Z"</span><span class="p">,</span></span></div><div class="row"><span class="n">25</span><span class="code" style="padding-left:173.40px"><span class="k">"first_name"</span><span class="p">: </span><span class="s">"John"</span><span class="p">,</span></span></div><div class="row"><span class="n">26</span><span class="code" style="padding-left:173.40px"><span class="k">"last_name"</span><span class="p">: </span><span class="s">"Doe"</span><span class="p">,</span></span></div><div class="row"><span class="n">27</span><span class="f"></span><span class="code" style="padding-left:173.40px"><span class="k">"memberships"</span><span class="p">: </span><span class="br">[</span></span></div></div>
<div class="ed" style="left:1717px;top:1190.4px;--c0:108.4px;--lh:33.7px"><div class="row"><span class="n">1</span><span class="f"></span><span class="code" style="padding-left:0.00px"><span class="br">{</span></span></div><div class="row"><span class="n">2</span><span class="code" style="padding-left:57.80px"><span class="c">// Required. Indicates whether the request should be allowed or</span></span></div><div class="row"><span class="n"></span><span class="code" style="padding-left:0.00px"><span class="c">denied.</span></span></div><div class="row"><span class="n">3</span><span class="code" style="padding-left:57.80px"><span class="k">"decision"</span><span class="p">: </span><span class="s">"ALLOW | DENY"</span><span class="p">,</span></span></div><div class="row"><span class="n">4</span><span class="code" style="padding-left:0.00px"></span></div><div class="row"><span class="n">5</span><span class="code" style="padding-left:57.80px"><span class="c">// Optional. Include when the decision is DENY to display an error</span></span></div><div class="row"><span class="n"></span><span class="code" style="padding-left:0.00px"><span class="c">message to the end user.</span></span></div><div class="row"><span class="n">6</span><span class="f"></span><span class="code" style="padding-left:57.80px"><span class="k">"error"</span><span class="p">: </span><span class="br">{</span></span></div><div class="row"><span class="n">7</span><span class="code" style="padding-left:115.60px"><span class="k">"message"</span><span class="p">: </span><span class="s">"string"</span><span class="c"> // Error message shown to the end user.</span></span></div><div class="row"><span class="n">8</span><span class="code" style="padding-left:57.80px"><span class="br">}</span></span></div><div class="row"><span class="n">9</span><span class="code" style="padding-left:0.00px"><span class="br">}</span></span></div></div>
</body></html>
